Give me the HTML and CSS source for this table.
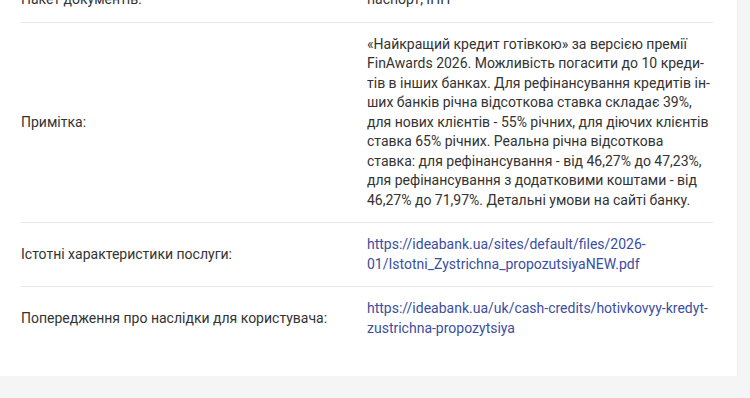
FILE: index.html
```html
<!DOCTYPE html>
<html lang="uk">
  <head>
    <meta charset="utf-8">
    <title>Готівковий кредит</title>
    <link rel="stylesheet" href="styles.css">
  </head>
  <body>
    <div class="card">
      <table class="info-table">
        <tr>
          <td class="label">Пакет документів:</td>
          <td class="value">паспорт, ІПН</td>
        </tr>
        <tr>
          <td class="label">Примітка:</td>
          <td class="value">«Найкращий кредит готівкою» за версією премії FinAwards 2026. Можливість погасити до 10 креди&shy;тів в інших банках. Для рефінансування кредитів ін&shy;ших банків річна відсоткова ставка складає 39%, для нових клієнтів - 55% річних, для діючих клієнтів ставка 65% річних. Реальна річна відсоткова ставка: для рефінансування - від 46,27% до 47,23%, для рефінансування з додатковими коштами - від 46,27% до 71,97%. Детальні умови на сайті банку.</td>
        </tr>
        <tr>
          <td class="label">Істотні характеристики послуги:</td>
          <td class="value"><a href="#">https://ideabank.ua/sites/default/files/2026-01/Istotni_Zystrichna_propozutsiyaNEW.pdf</a></td>
        </tr>
        <tr>
          <td class="label">Попередження про наслідки для користувача:</td>
          <td class="value"><a href="#">https://ideabank.ua/uk/cash-credits/hotivkovyy-kredyt-zustrichna-propozytsiya</a></td>
        </tr>
      </table>
    </div>
  </body>
</html>
```

FILE: styles.css
```css
body {
  margin: 0;
  background-color: #f5f5f5;
  font-family: Roboto, "Liberation Sans", sans-serif;
  font-size: 14px;
  line-height: 19.5px;
  color: #333;
}

.card {
  width: 692px;
  margin-top: -22px;
  padding: 0 24px 26px 21px;
  background-color: #fff;
  box-shadow: 0 1px 2px rgba(0, 0, 0, 0.08);
}

.info-table {
  width: 100%;
  border-collapse: collapse;
  table-layout: fixed;
}

.info-table tr + tr td {
  border-top: 1px solid #e6e6e6;
}

.info-table td {
  padding: 12px 0;
  vertical-align: middle;
}

.label {
  width: 346px;
}

.value {
  padding-right: 4px;
}

.value a {
  color: #3b4ea0;
  text-decoration: none;
}
```
